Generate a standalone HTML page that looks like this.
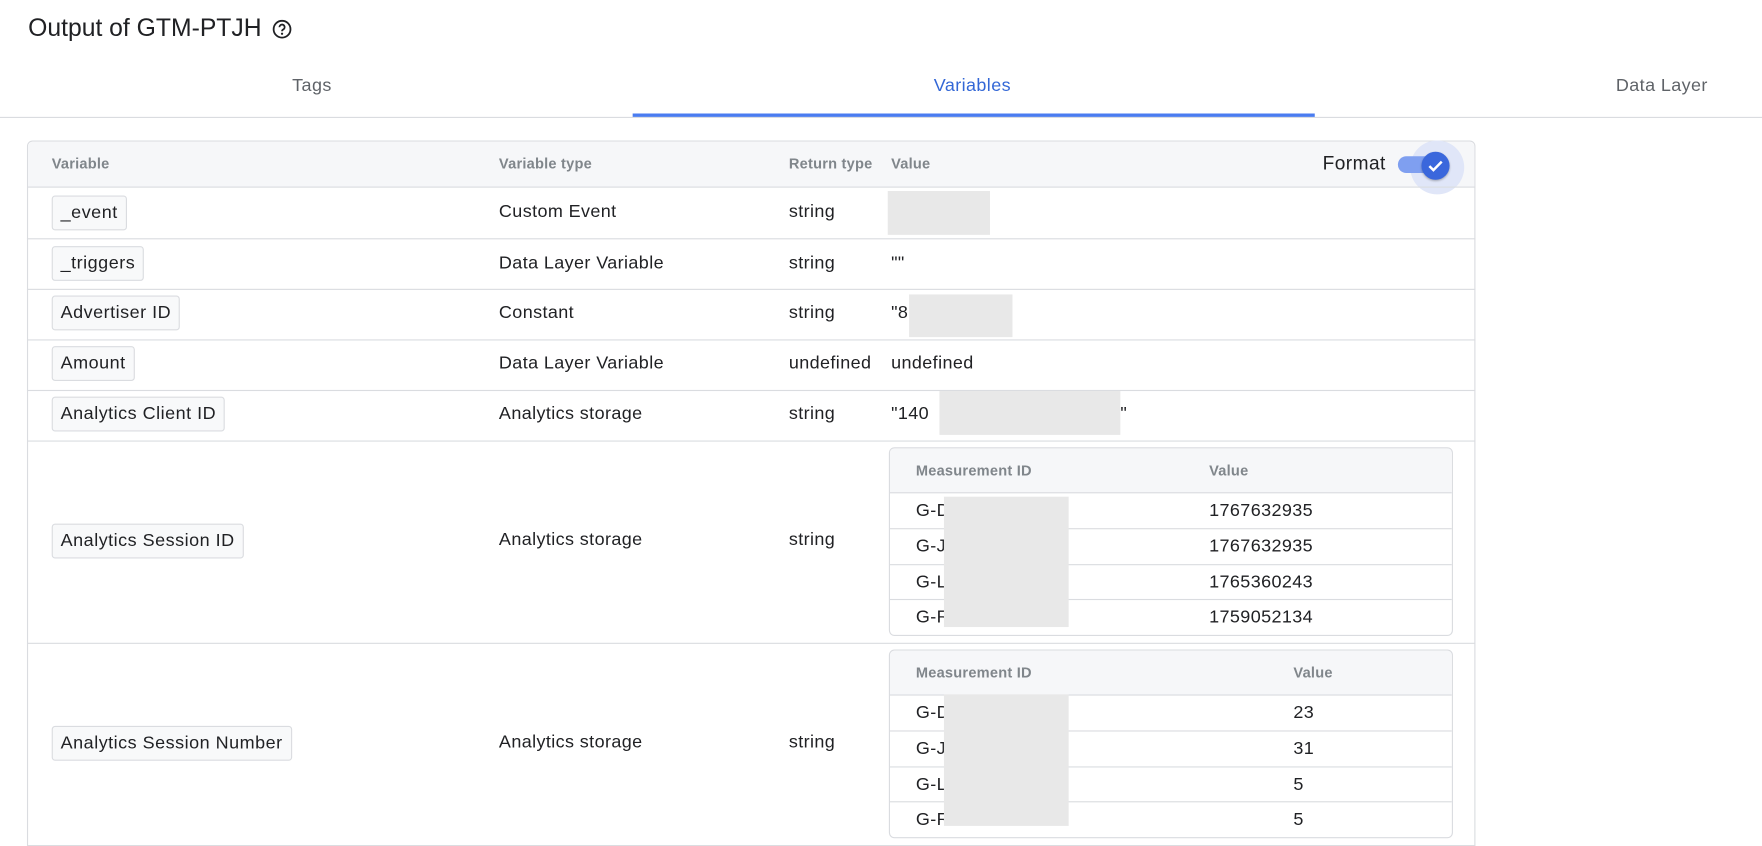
<!DOCTYPE html>
<html><head><meta charset="utf-8"><style>
html,body{margin:0;padding:0;background:#fff;overflow:hidden;width:1762px;height:846px}
#w{position:absolute;left:0;top:0;width:1568px;height:752.8px;overflow:hidden;transform:scale(1.12372);transform-origin:0 0;font-family:"Liberation Sans",Arial,sans-serif;color:#202124}
.a{position:absolute;white-space:nowrap}
.t{font-size:16px;line-height:20px;letter-spacing:0.35px}
.h{font-size:13px;font-weight:bold;color:#80868b;letter-spacing:0.2px}
.chip{position:absolute;left:46px;height:29px;line-height:29px;padding:0 7px;background:#f8f9fa;border:1px solid #dadce0;border-radius:3px;font-size:16px;letter-spacing:0.45px}
.line{position:absolute;left:24px;width:1289px;height:1px;background:#dadce0}
.g{position:absolute;background:#e8e8e8}
.nt{position:absolute;left:791px;width:500px;border:1px solid #dadce0;border-radius:5px;overflow:hidden;background:#fff}
.nt .hd{height:39px;background:#f6f7f9;border-bottom:1px solid #dadce0;position:relative}
.nt .r{height:30.75px;border-bottom:1px solid #dadce0;position:relative}
.nt .r:last-child{border-bottom:none}
</style></head><body><div id="w">
<div class="a" style="left:25px;top:12px;font-size:22px;line-height:26px">Output of GTM-PTJH</div>
<svg class="a" style="left:242px;top:17px" width="18" height="18" viewBox="0 0 18 18"><circle cx="9" cy="9" r="7.5" fill="none" stroke="#202124" stroke-width="1.6"/><path d="M6.7 7.2a2.3 2.3 0 1 1 3.4 2c-.8.4-1.1.8-1.1 1.6" fill="none" stroke="#202124" stroke-width="1.6"/><circle cx="9" cy="13" r="1" fill="#202124"/></svg>
<div class="a t" style="left:260px;top:67px;color:#5f6368">Tags</div>
<div class="a t" style="left:831px;top:67px;color:#3367d6">Variables</div>
<div class="a t" style="left:1438px;top:67px;color:#5f6368">Data Layer</div>
<div class="a" style="left:0;top:104px;width:1568px;height:1px;background:#dadce0"></div>
<div class="a" style="left:563px;top:101px;width:607px;height:3px;background:#4a7cf0"></div>

<div class="a" style="left:24px;top:125px;width:1287px;height:700px;border:1px solid #dadce0;border-radius:5px"></div>
<div class="a" style="left:25px;top:126px;width:1287px;height:40px;background:#f6f7f9;border-radius:5px 5px 0 0"></div>
<div class="a h" style="left:46px;top:138px">Variable</div>
<div class="a h" style="left:444px;top:138px">Variable type</div>
<div class="a h" style="left:702px;top:138px">Return type</div>
<div class="a h" style="left:793px;top:138px">Value</div>
<div class="a" style="left:1177px;top:135px;font-size:17px;line-height:22px;letter-spacing:0.4px">Format</div>
<div class="a" style="left:1255px;top:125px;width:48px;height:48px;border-radius:50%;background:#e0e6f8"></div>
<div class="a" style="left:1244px;top:139px;width:36px;height:15px;border-radius:8px;background:#7f9ff0"></div>
<div class="a" style="left:1265px;top:135px;width:25px;height:25px;border-radius:50%;background:#3a67dc;box-shadow:0 1px 2px rgba(0,0,0,.3)"></div>
<svg class="a" style="left:1265px;top:135px" width="25" height="25" viewBox="0 0 25 25"><path d="M7 12.8l3.6 3.6 7.4-7.6" fill="none" stroke="#fff" stroke-width="2.2"/></svg>

<div class="line" style="top:166px"></div>
<div class="line" style="top:212px"></div>
<div class="line" style="top:257px"></div>
<div class="line" style="top:302px"></div>
<div class="line" style="top:347px"></div>
<div class="line" style="top:392px"></div>
<div class="line" style="top:572px"></div>
<div class="line" style="top:752px"></div>

<div class="chip" style="top:174px">_event</div>
<div class="a t" style="left:444px;top:179px">Custom Event</div>
<div class="a t" style="left:702px;top:179px">string</div>
<div class="g" style="left:790px;top:170px;width:91px;height:39px"></div>

<div class="chip" style="top:219px">_triggers</div>
<div class="a t" style="left:444px;top:225px">Data Layer Variable</div>
<div class="a t" style="left:702px;top:225px">string</div>
<div class="a t" style="left:793px;top:225px">""</div>

<div class="chip" style="top:263px">Advertiser ID</div>
<div class="a t" style="left:444px;top:269px">Constant</div>
<div class="a t" style="left:702px;top:269px">string</div>
<div class="a t" style="left:793px;top:269px">"8</div>
<div class="g" style="left:809px;top:262px;width:92px;height:38px"></div>

<div class="chip" style="top:308px">Amount</div>
<div class="a t" style="left:444px;top:314px">Data Layer Variable</div>
<div class="a t" style="left:702px;top:314px">undefined</div>
<div class="a t" style="left:793px;top:314px">undefined</div>

<div class="chip" style="top:353px">Analytics Client ID</div>
<div class="a t" style="left:444px;top:359px">Analytics storage</div>
<div class="a t" style="left:702px;top:359px">string</div>
<div class="a t" style="left:793px;top:359px">"140</div>
<div class="a t" style="left:997px;top:359px">"</div>
<div class="g" style="left:836px;top:348px;width:161px;height:39px"></div>

<div class="chip" style="top:466px">Analytics Session ID</div>
<div class="a t" style="left:444px;top:471px">Analytics storage</div>
<div class="a t" style="left:702px;top:471px">string</div>
<div class="nt" style="top:398px">
<div class="hd"><div class="a h" style="left:23px;top:12px">Measurement ID</div><div class="a h" style="left:284px;top:12px">Value</div></div>
<div class="r"><div class="a t" style="left:23px;top:6px">G-D</div><div class="a t" style="left:284px;top:6px">1767632935</div></div>
<div class="r"><div class="a t" style="left:23px;top:6px">G-J</div><div class="a t" style="left:284px;top:6px">1767632935</div></div>
<div class="r"><div class="a t" style="left:23px;top:6px">G-L</div><div class="a t" style="left:284px;top:6px">1765360243</div></div>
<div class="r"><div class="a t" style="left:23px;top:6px">G-R</div><div class="a t" style="left:284px;top:6px">1759052134</div></div>
</div>
<div class="g" style="left:840px;top:442px;width:111px;height:116px"></div>

<div class="chip" style="top:646px">Analytics Session Number</div>
<div class="a t" style="left:444px;top:651px">Analytics storage</div>
<div class="a t" style="left:702px;top:651px">string</div>
<div class="nt" style="top:578px">
<div class="hd"><div class="a h" style="left:23px;top:12px">Measurement ID</div><div class="a h" style="left:359px;top:12px">Value</div></div>
<div class="r"><div class="a t" style="left:23px;top:6px">G-D</div><div class="a t" style="left:359px;top:6px">23</div></div>
<div class="r"><div class="a t" style="left:23px;top:6px">G-J</div><div class="a t" style="left:359px;top:6px">31</div></div>
<div class="r"><div class="a t" style="left:23px;top:6px">G-L</div><div class="a t" style="left:359px;top:6px">5</div></div>
<div class="r"><div class="a t" style="left:23px;top:6px">G-R</div><div class="a t" style="left:359px;top:6px">5</div></div>
</div>
<div class="g" style="left:840px;top:618px;width:111px;height:117px"></div>
</div></body></html>
